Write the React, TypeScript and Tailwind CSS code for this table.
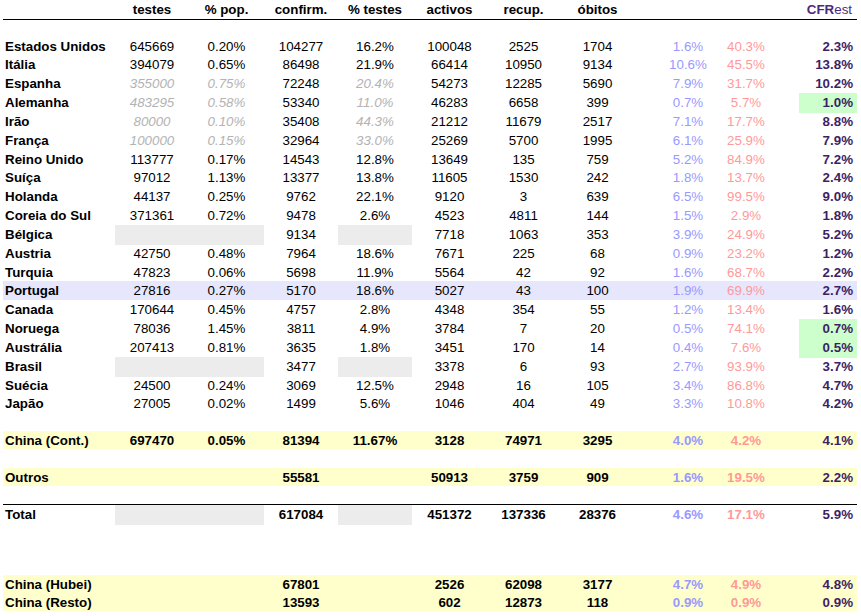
import React from 'react';

// column layout shared by every row of the sheet
const COLS = 'grid grid-cols-[112px_74px_75px_74px_74px_75px_73px_75px_19px_68px_48px_29px_58px]';

type Cell = string | null; // null = grey (no data) box
type Row = {
  name: string;
  v: [Cell, Cell, string, Cell, string, string, string, string, string, string];
  est?: boolean; // testes estimated -> grey italic
  green?: boolean;
};

const rows: Row[] = [
  { name: 'Estados Unidos', v: ['645669', '0.20%', '104277', '16.2%', '100048', '2525', '1704', '1.6%', '40.3%', '2.3%'] },
  { name: 'Itália', v: ['394079', '0.65%', '86498', '21.9%', '66414', '10950', '9134', '10.6%', '45.5%', '13.8%'] },
  { name: 'Espanha', est: true, v: ['355000', '0.75%', '72248', '20.4%', '54273', '12285', '5690', '7.9%', '31.7%', '10.2%'] },
  { name: 'Alemanha', est: true, green: true, v: ['483295', '0.58%', '53340', '11.0%', '46283', '6658', '399', '0.7%', '5.7%', '1.0%'] },
  { name: 'Irão', est: true, v: ['80000', '0.10%', '35408', '44.3%', '21212', '11679', '2517', '7.1%', '17.7%', '8.8%'] },
  { name: 'França', est: true, v: ['100000', '0.15%', '32964', '33.0%', '25269', '5700', '1995', '6.1%', '25.9%', '7.9%'] },
  { name: 'Reino Unido', v: ['113777', '0.17%', '14543', '12.8%', '13649', '135', '759', '5.2%', '84.9%', '7.2%'] },
  { name: 'Suíça', v: ['97012', '1.13%', '13377', '13.8%', '11605', '1530', '242', '1.8%', '13.7%', '2.4%'] },
  { name: 'Holanda', v: ['44137', '0.25%', '9762', '22.1%', '9120', '3', '639', '6.5%', '99.5%', '9.0%'] },
  { name: 'Coreia do Sul', v: ['371361', '0.72%', '9478', '2.6%', '4523', '4811', '144', '1.5%', '2.9%', '1.8%'] },
  { name: 'Bélgica', v: [null, null, '9134', null, '7718', '1063', '353', '3.9%', '24.9%', '5.2%'] },
  { name: 'Austria', v: ['42750', '0.48%', '7964', '18.6%', '7671', '225', '68', '0.9%', '23.2%', '1.2%'] },
  { name: 'Turquia', v: ['47823', '0.06%', '5698', '11.9%', '5564', '42', '92', '1.6%', '68.7%', '2.2%'] },
  { name: 'Portugal', v: ['27816', '0.27%', '5170', '18.6%', '5027', '43', '100', '1.9%', '69.9%', '2.7%'] },
  { name: 'Canada', v: ['170644', '0.45%', '4757', '2.8%', '4348', '354', '55', '1.2%', '13.4%', '1.6%'] },
  { name: 'Noruega', green: true, v: ['78036', '1.45%', '3811', '4.9%', '3784', '7', '20', '0.5%', '74.1%', '0.7%'] },
  { name: 'Austrália', green: true, v: ['207413', '0.81%', '3635', '1.8%', '3451', '170', '14', '0.4%', '7.6%', '0.5%'] },
  { name: 'Brasil', v: [null, null, '3477', null, '3378', '6', '93', '2.7%', '93.9%', '3.7%'] },
  { name: 'Suécia', v: ['24500', '0.24%', '3069', '12.5%', '2948', '16', '105', '3.4%', '86.8%', '4.7%'] },
  { name: 'Japão', v: ['27005', '0.02%', '1499', '5.6%', '1046', '404', '49', '3.3%', '10.8%', '4.2%'] },
];

const china: Row = { name: 'China (Cont.)', v: ['697470', '0.05%', '81394', '11.67%', '3128', '74971', '3295', '4.0%', '4.2%', '4.1%'] };
const outros: Row = { name: 'Outros', v: ['', '', '55581', '', '50913', '3759', '909', '1.6%', '19.5%', '2.2%'] };
const total: Row = { name: 'Total', v: [null, null, '617084', null, '451372', '137336', '28376', '4.6%', '17.1%', '5.9%'] };
const hubei: Row = { name: 'China (Hubei)', v: ['', '', '67801', '', '2526', '62098', '3177', '4.7%', '4.9%', '4.8%'] };
const resto: Row = { name: 'China (Resto)', v: ['', '', '13593', '', '602', '12873', '118', '0.9%', '0.9%', '0.9%'] };

function SheetRow({ r, h, bold, bg }: { r: Row; h: string; bold?: boolean; bg?: string }) {
  const [testes, pop, confirm, pct, activos, recup, obitos, blue, pink, cfr] = r.v;
  const grey = r.est ? 'italic text-[#b3b3b3]' : '';
  const num = (val: Cell, extra = '') =>
    val === null ? (
      <div className="bg-[#ececec]" />
    ) : (
      <div className={`flex items-center justify-center ${extra}`}>{val}</div>
    );

  return (
    <div className={`${COLS} ${h} ${bg ?? ''} ${bold ? 'font-bold' : ''}`}>
      <div className="flex items-center pl-[2px] font-bold whitespace-nowrap">{r.name}</div>
      {num(testes, grey)}
      {num(pop, grey)}
      {num(confirm)}
      {num(pct, grey)}
      {num(activos)}
      {num(recup)}
      {num(obitos)}
      <div />
      <div className="flex items-center justify-center text-[#9999ff]">{blue}</div>
      <div className="flex items-center justify-center text-[#ff9999]">{pink}</div>
      <div />
      <div className={`flex items-center justify-end pr-[4px] font-bold text-[#3d1f66] ${r.green ? 'bg-[#ccffcc]' : ''}`}>
        {cfr}
      </div>
    </div>
  );
}

export default function App() {
  return (
    <div className="w-[861px] h-[616px] overflow-hidden bg-white text-black text-[13.33px] font-['Liberation_Sans',Arial,sans-serif]">
      <div className="ml-[3px] w-[854px]">
        {/* header */}
        <div className={`${COLS} h-[20px] border-b border-black font-bold`}>
          <div />
          <div className="flex items-center justify-center">testes</div>
          <div className="flex items-center justify-center">% pop.</div>
          <div className="flex items-center justify-center">confirm.</div>
          <div className="flex items-center justify-center">% testes</div>
          <div className="flex items-center justify-center">activos</div>
          <div className="flex items-center justify-center">recup.</div>
          <div className="flex items-center justify-center">óbitos</div>
          <div />
          <div />
          <div />
          <div />
          <div className="flex items-center justify-end pr-[5px] text-[#4a2a7e]">
            CFR<span className="font-normal">est</span>
          </div>
        </div>

        <div className="h-[16.6px]" />

        {rows.map((r) => (
          <SheetRow key={r.name} r={r} h="h-[18.84px]" bg={r.name === 'Portugal' ? 'bg-[#e6e6fc]' : undefined} />
        ))}

        <div className="h-[18.3px]" />
        <SheetRow r={china} h="h-[18px]" bold bg="bg-[#ffffcc]" />
        <div className="h-[18.6px]" />
        <SheetRow r={outros} h="h-[17.7px]" bold bg="bg-[#ffffcc]" />
        <div className="h-[18px]" />
        <div className="border-t border-black">
          <SheetRow r={total} h="h-[17px]" bold />
        </div>
        <div className="h-[53px]" />
        <SheetRow r={hubei} h="h-[18px]" bold bg="bg-[#ffffcc]" />
        <SheetRow r={resto} h="h-[18px]" bold bg="bg-[#ffffcc]" />
      </div>
    </div>
  );
}
